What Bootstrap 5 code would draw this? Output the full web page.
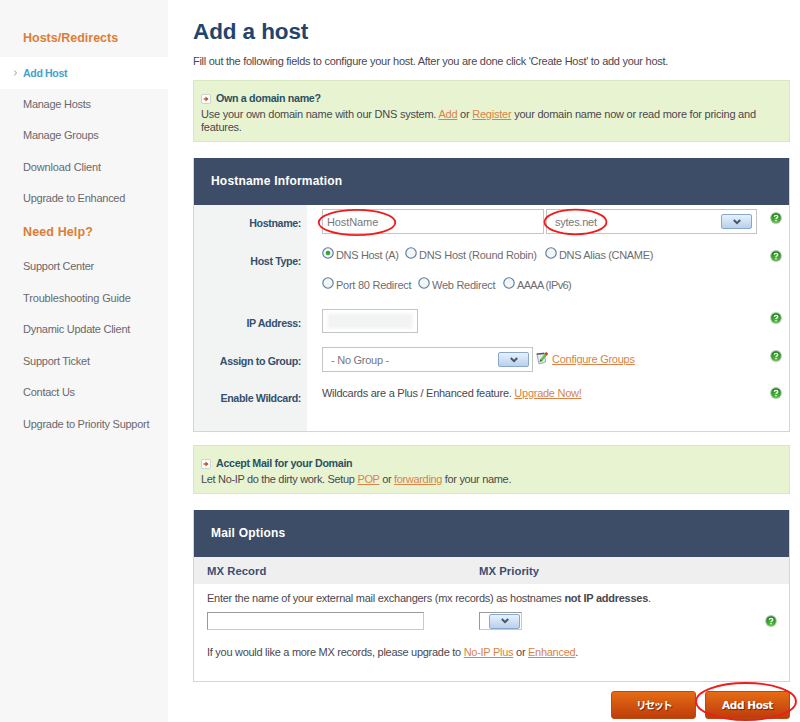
<!DOCTYPE html>
<html lang="en">
<head>
<meta charset="utf-8">
<title>Add a host</title>
<link href="https://cdn.jsdelivr.net/npm/bootstrap@5.3.0/dist/css/bootstrap.min.css" rel="stylesheet">
<style>
body{font:11px/13px "Liberation Sans","Noto Sans CJK JP",sans-serif;letter-spacing:-.26px;color:#4b474e;width:800px;height:722px;overflow:hidden;background:#fff}
a{color:#d98349}
a:hover{color:#b9601f}
.side{width:168px;height:722px;background:#f7f7f7;padding-top:18px}
.side h2{font-size:12.5px;line-height:20px;letter-spacing:0;font-weight:bold;color:#dd7d36;margin:0;padding-left:23px}
.side h2.first{margin:10px 0 9px}
.side h2.second{margin:7px 0 9px;letter-spacing:.12px}
.side .nav-link{font-size:11px;height:31.6px;line-height:31.2px;padding:0 0 0 23px;color:#6a686c;white-space:nowrap}
.side .nav-link.active{background:#fff;color:#469fc9;font-weight:bold;font-size:10.6px;letter-spacing:-.37px;line-height:32px}
.side .nav-link svg{margin-left:-9px;margin-right:6px;vertical-align:1px}
.side .ls-14{letter-spacing:-.15px}
.ls-33{letter-spacing:-.33px}
.main{margin-left:25px;width:597px}
h1{font-size:22.5px;line-height:30px;letter-spacing:-.1px;font-weight:bold;color:#22446d;margin:17px 0 8px}
.intro{letter-spacing:-.278px}
.note{background:#e8f4d1;border:1px solid #d9e8c3;padding:9px 7px 0}
.note h3{font-size:10.7px;line-height:16px;font-weight:bold;letter-spacing:-.32px;color:#2b5063;margin:0 0 2px}
.note h3 svg{margin-right:5px;vertical-align:-2px}
.note p{margin:0;letter-spacing:-.235px}
.note p.ls-33{letter-spacing:-.33px}
.n1{height:62px;margin-top:12px}
.n2{height:49px;margin-top:13px}
.p1{margin-top:16px}
.p2{margin-top:16px}
.panel{border:1px solid #d3d5d8}
.panel-top{background:#3d4d67;height:47px;line-height:46px;color:#fff;font-size:12px;letter-spacing:.2px;font-weight:bold;padding-left:17px;margin:-1px 0 0}
.line{display:grid;grid-template-columns:113px 1fr 26px}
.lbl{background:#f2f4f4;color:#34506e;font-weight:bold;font-size:10.7px;letter-spacing:-.38px;text-align:right;padding:12px 6px 0 0}
.fld{padding:4px 0 0 15px;color:#6d6d70;white-space:nowrap}
.hlp{padding:7px 0 0 7px;line-height:0}
.h38{height:38px}.h62{height:62px}.h37{height:37px}.h51{height:51px}
.box{border:1px solid #c4c4c6;height:25px;background:#fff;line-height:24px;color:#77777a}
.b-host{width:222px;padding-left:4px;letter-spacing:-.1px;margin-right:2px}
.b-dom{width:211px;padding:0 4px 0 8px}
.b-ip{width:96px;height:24px}
.b-grp{width:211px;padding:0 3px 0 8px}
.drop{border:1px solid #88a7cb;border-radius:2px;background:linear-gradient(#e8f1fc,#b9d0ec);width:31px;height:15px}
.ring{position:absolute;pointer-events:none;overflow:visible}
.ring ellipse{fill:none;stroke:#f01c1c;stroke-width:1.8}
.r-host{left:-5px;top:-1px}
.r-dom{left:-3px;top:-1px}
.r-act{left:-9px;top:-9px}
.smear{background:#f2f3f3;box-shadow:0 0 3px 2px #f5f6f6;height:12px;margin:5px 6px}
.opts{height:30px;position:relative;padding-top:2px}
.opts svg{margin-right:2px;margin-top:-1px;position:relative;top:-2px}
.tight{letter-spacing:-.65px}
.plain{color:#4b474e;padding-top:7px}
.mxhead{background:#efefef;height:27px;line-height:28px;color:#3b4f72;font-size:11.3px;font-weight:bold;letter-spacing:.05px}
.c1{padding-left:13px;width:285px}
.mxtext{padding:8px 0 0 13px}
.mxmore{padding:16px 0 0 13px;height:51px;letter-spacing:-.28px}
.mx{border:1px solid #c9c9c9;border-top-color:#999;border-left-color:#999;height:18px}
.act{width:85px;height:28px;border:1px solid #b94a14;border-radius:3px;background:linear-gradient(#e56c14,#bf3c0b);color:#fff;font:bold 10.5px/27px "DejaVu Sans","Noto Sans CJK JP",sans-serif;letter-spacing:-.4px;text-align:center;text-shadow:1px 1px 1px #6b2406;padding:0;display:block}
.act:hover{color:#fff;background:#bf3c0b}
.jp{letter-spacing:-1.8px}
</style>
</head>
<body>
<svg width="0" height="0" class="position-absolute">
<defs>
<radialGradient id="gg" cx=".5" cy=".8" r=".8"><stop offset="0" stop-color="#58c83e"/><stop offset="1" stop-color="#178016"/></radialGradient>
<symbol id="help" viewBox="0 0 12 12"><circle cx="6" cy="6" r="5.9" fill="#b4c4b2"/><circle cx="6" cy="6" r="4.8" fill="url(#gg)"/><path d="M4.3 4.8C4.3 3 7.8 3 7.8 4.8C7.8 6 6 5.8 6 7.1M6 8.1V9.2" fill="none" stroke="#fff" stroke-width="1.3"/></symbol>
<symbol id="plus" viewBox="0 0 10 10"><rect x=".5" y=".5" width="9" height="9" rx="1.5" fill="#fff" stroke="#d2d0cc"/><path d="M2.5 5H5" stroke="#c4683c" stroke-width="1.5"/><path d="M4.5 2.4L7.6 5L4.5 7.6Z" fill="#b4532e"/></symbol>
<symbol id="chev" viewBox="0 0 8 6"><path d="M.8 1L4 4.2L7.2 1" fill="none" stroke="#45546b" stroke-width="2"/></symbol>
<symbol id="radio" viewBox="0 0 12 12"><circle cx="6" cy="6" r="5.2" fill="#f3f5f6" stroke="#55789d" stroke-width="1.1"/></symbol>
</defs></svg>
<div class="d-flex">
<nav class="side flex-shrink-0 nav flex-column flex-nowrap">
<h2 class="first">Hosts/Redirects</h2>
<a class="nav-link active" href="#"><svg width="3" height="6"><path d="M.3 .5L2.5 3L.3 5.5" fill="none" stroke="#999"/></svg>Add Host</a>
<a class="nav-link" href="#">Manage Hosts</a>
<a class="nav-link" href="#">Manage Groups</a>
<a class="nav-link ls-14" href="#">Download Client</a>
<a class="nav-link" href="#">Upgrade to Enhanced</a>
<h2 class="second">Need Help?</h2>
<a class="nav-link" href="#">Support Center</a>
<a class="nav-link ls-14" href="#">Troubleshooting Guide</a>
<a class="nav-link" href="#">Dynamic Update Client</a>
<a class="nav-link" href="#">Support Ticket</a>
<a class="nav-link" href="#">Contact Us</a>
<a class="nav-link" href="#">Upgrade to Priority Support</a>
</nav>
<main class="main">
<h1>Add a host</h1>
<p class="mb-0 text-nowrap intro">Fill out the following fields to configure your host. After you are done click 'Create Host' to add your host.</p>
<section class="note n1"><h3><svg width="10" height="10"><use href="#plus"/></svg>Own a domain name?</h3><p>Use your own domain name with our DNS system. <a href="#">Add</a> or <a href="#">Register</a> your domain name now or read more for pricing and<br>features.</p></section>

<section class="panel p1">
<h2 class="panel-top">Hostname Information</h2>
<div class="line h38"><div class="lbl">Hostname:</div>
<div class="fld d-flex"><div class="box b-host position-relative">HostName<svg class="ring r-host" width="78" height="27"><ellipse cx="39" cy="13.5" rx="38.3" ry="12.6"/></svg></div><div class="box b-dom d-flex align-items-center justify-content-between position-relative">sytes.net<span class="drop d-flex align-items-center justify-content-center"><svg width="8" height="6"><use href="#chev"/></svg></span><svg class="ring r-dom" width="64" height="26"><ellipse cx="31.5" cy="13" rx="31" ry="12.3"/></svg></div></div>
<div class="hlp"><svg width="12" height="12"><use href="#help"/></svg></div></div>
<div class="line h62"><div class="lbl">Host Type:</div>
<div class="fld">
<div class="d-flex opts"><label class="ls-33" style="width:83px"><svg width="12" height="12" class="align-text-bottom"><use href="#radio"/><circle cx="6" cy="6" r="2.3" fill="#35a53a"/></svg>DNS Host (A)</label><label style="width:140px"><svg width="12" height="12" class="align-text-bottom"><use href="#radio"/></svg>DNS Host (Round Robin)</label><label class="ls-33"><svg width="12" height="12" class="align-text-bottom"><use href="#radio"/></svg>DNS Alias (CNAME)</label></div>
<div class="d-flex opts"><label style="width:96px"><svg width="12" height="12" class="align-text-bottom"><use href="#radio"/></svg>Port 80 Redirect</label><label style="width:85px"><svg width="12" height="12" class="align-text-bottom"><use href="#radio"/></svg>Web Redirect</label><label class="tight"><svg width="12" height="12" class="align-text-bottom"><use href="#radio"/></svg>AAAA (IPv6)</label></div>
</div>
<div class="hlp"><svg width="12" height="12"><use href="#help"/></svg></div></div>
<div class="line h38"><div class="lbl">IP Address:</div><div class="fld"><div class="box b-ip"><div class="smear"></div></div></div><div class="hlp"><svg width="12" height="12"><use href="#help"/></svg></div></div>
<div class="line h37"><div class="lbl">Assign to Group:</div><div class="fld d-flex"><div class="box b-grp d-flex align-items-center justify-content-between">- No Group -<span class="drop d-flex align-items-center justify-content-center"><svg width="8" height="6"><use href="#chev"/></svg></span></div>
<svg width="12" height="13" viewBox="0 0 12 13" style="margin:5px 0 0 3px"><path d="M.8 1.8L8.5 1L9.6 10L3 12Z" fill="#e6eaec" stroke="#999da2" stroke-width=".9"/><path d="M.8 2.1L8 1.5" stroke="#505458" stroke-width="1.4"/><path d="M10.3 2.2L5 8.5" stroke="#5cc63c" stroke-width="2.6"/><path d="M9.3 .9L11.5 2.6" stroke="#ce3929" stroke-width="2.4"/><path d="M4.3 7.2L3.6 10L6.3 9Z" fill="#3a6a28"/></svg>
<a href="#" class="align-self-start" style="margin:6px 0 0 4px">Configure Groups</a></div><div class="hlp"><svg width="12" height="12"><use href="#help"/></svg></div></div>
<div class="line h51"><div class="lbl">Enable Wildcard:</div><div class="fld plain">Wildcards are a Plus / Enhanced feature. <a href="#">Upgrade Now!</a></div><div class="hlp"><svg width="12" height="12"><use href="#help"/></svg></div></div>
</section>

<section class="note n2"><h3><svg width="10" height="10"><use href="#plus"/></svg>Accept Mail for your Domain</h3><p class="ls-33">Let No-IP do the dirty work. Setup <a href="#">POP</a> or <a href="#">forwarding</a> for your name.</p></section>

<section class="panel p2">
<h2 class="panel-top">Mail Options</h2>
<div class="mxhead d-flex"><div class="c1">MX Record</div><div>MX Priority</div></div>
<p class="mb-0 mxtext">Enter the name of your external mail exchangers (mx records) as hostnames <b>not IP addresses</b>.</p>
<div class="d-flex align-items-center" style="margin-top:7px"><div class="c1"><div class="mx" style="width:217px"></div></div><div class="mx d-flex align-items-center justify-content-end" style="width:43px;padding-right:1px"><span class="drop d-flex align-items-center justify-content-center"><svg width="8" height="6"><use href="#chev"/></svg></span></div><svg width="12" height="12" class="ms-auto" style="margin-right:12px"><use href="#help"/></svg></div>
<p class="mb-0 mxmore">If you would like a more MX records, please upgrade to <a href="#">No-IP Plus</a> or <a href="#">Enhanced</a>.</p>
</section>
<div class="d-flex justify-content-end" style="gap:9px;margin-top:9px"><button class="btn act jp">リセット</button><div class="position-relative"><button class="btn act">Add Host</button><svg class="ring r-act" width="101" height="39"><ellipse cx="50" cy="19.5" rx="50" ry="18.5"/></svg></div></div>
</main>
</div>
</body></html>
